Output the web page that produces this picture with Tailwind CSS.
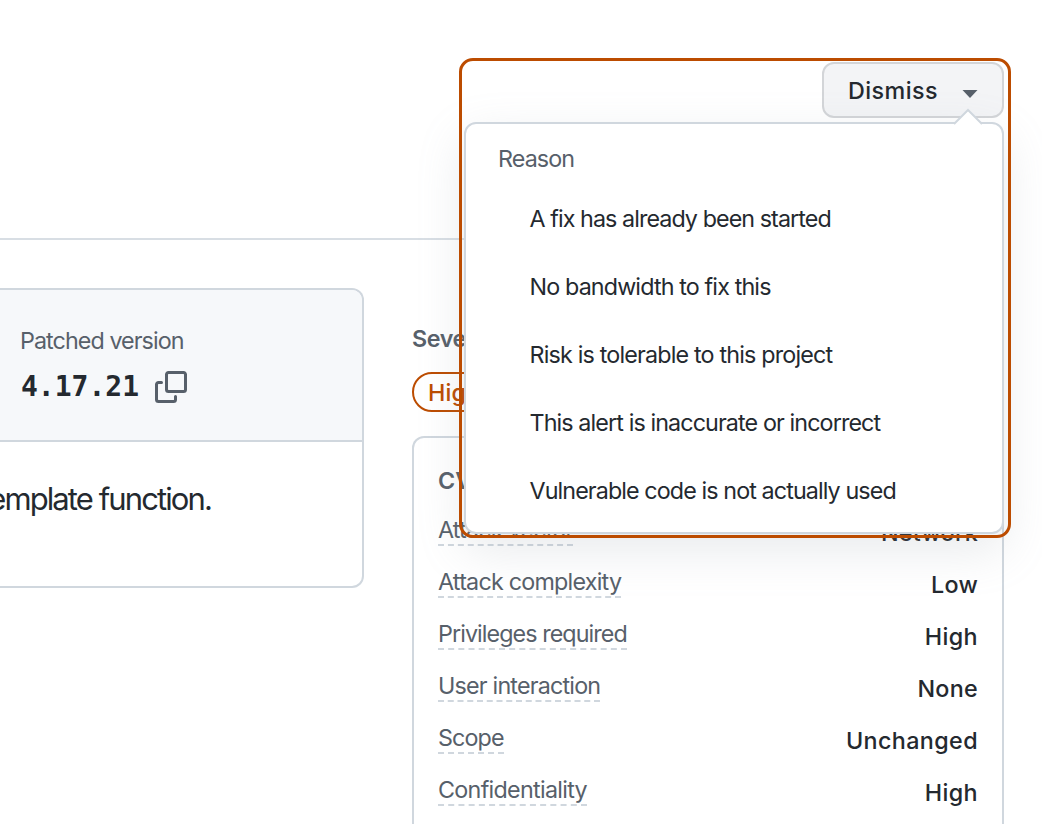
<!DOCTYPE html>
<html lang="en">
<head>
<meta charset="utf-8">
<title>Dismiss alert</title>
<script src="https://cdn.jsdelivr.net/npm/@tailwindcss/browser@4"></script>
</head>
<body class="bg-white">
<div class="relative flex h-[824px] w-[1042px] flex-col overflow-hidden bg-white font-['Inter',sans-serif] text-[23.3px] leading-8 text-[#24292f]">

  <header class="flex h-60 w-[1004px] shrink-0 items-start justify-end border-b-2 border-[#d8dee4] pt-[62px]">
    <button class="flex h-14 w-[182px] items-center gap-6 rounded-xl border-2 border-[#d3d5d8] bg-[#f3f4f6] pl-6 font-medium">
      <span class="pt-0.5 tracking-[0.45px]">Dismiss</span>
      <svg class="mt-2 h-2 w-4" viewBox="0 0 16 8" fill="#57606a"><path d="M0.5 0h15L8 8z"/></svg>
    </button>
  </header>

  <main class="flex flex-1 gap-12 pt-12">
    <section class="h-[300px] w-[364px] shrink-0 overflow-hidden rounded-r-xl border-2 border-l-0 border-[#d0d7de]">
      <div class="flex h-[152px] flex-col border-b-2 border-[#d0d7de] bg-[#f6f8fa] pt-[35px] pl-5">
        <div class="text-[#57606a]"><span class="tracking-[-0.93px]">Patched version</span></div>
        <div class="mt-3.5 flex h-8 items-center gap-4 pl-px">
          <span class="font-['DejaVu_Sans_Mono',monospace] text-[28px] font-bold">4.17.21</span>
          <svg class="h-8 w-8" viewBox="0 0 16 16" fill="#57606a"><path d="M0 6.75C0 5.784.784 5 1.75 5h1.5a.75.75 0 0 1 0 1.5h-1.5a.25.25 0 0 0-.25.25v7.5c0 .138.112.25.25.25h7.5a.25.25 0 0 0 .25-.25v-1.5a.75.75 0 0 1 1.5 0v1.5A1.75 1.75 0 0 1 9.25 16h-7.5A1.75 1.75 0 0 1 0 14.25Z"/><path d="M5 1.75C5 .784 5.784 0 6.75 0h7.5C15.216 0 16 .784 16 1.75v7.5A1.75 1.75 0 0 1 14.25 11h-7.5A1.75 1.75 0 0 1 5 9.25Zm1.75-.25a.25.25 0 0 0-.25.25v7.5c0 .138.112.25.25.25h7.5a.25.25 0 0 0 .25-.25v-7.5a.25.25 0 0 0-.25-.25Z"/></svg>
        </div>
      </div>
      <p class="flex h-[113px] w-[211px] items-center justify-end text-[31px] tracking-[-1.9px] whitespace-nowrap">template function.</p>
    </section>

    <aside class="flex w-[592px] shrink-0 flex-col items-start pt-[35px]">
      <h3 class="font-semibold tracking-[-0.4px] text-[#57606a]">Severity</h3>
      <div class="mt-[17px] flex h-10 items-center rounded-full border-2 border-[#bc4c00] px-3.5 pt-0.5 font-medium tracking-[0.2px] text-[#bc4c00]">High</div>
      <div class="mt-6 flex h-[420px] w-full shrink-0 flex-col rounded-t-xl border-2 border-b-0 border-[#d0d7de] px-6 pt-[27px]">
        <h4 class="font-semibold text-[#57606a]">CVSS base metrics</h4>
        <dl class="mt-[17px] flex flex-col">
          <div class="flex h-[52px] justify-between"><dt class="h-8 border-b-2 border-dashed border-[#d0d7de] tracking-[-0.8px] text-[#57606a]">Attack vector</dt><dd class="pt-[3px] font-medium tracking-[0.3px]">Network</dd></div>
          <div class="flex h-[52px] justify-between"><dt class="h-8 border-b-2 border-dashed border-[#d0d7de] tracking-[-0.77px] text-[#57606a]">Attack complexity</dt><dd class="pt-[3px] font-medium tracking-[0.3px]">Low</dd></div>
          <div class="flex h-[52px] justify-between"><dt class="h-8 border-b-2 border-dashed border-[#d0d7de] tracking-[-0.92px] text-[#57606a]">Privileges required</dt><dd class="pt-[3px] font-medium tracking-[0.4px]">High</dd></div>
          <div class="flex h-[52px] justify-between"><dt class="h-8 border-b-2 border-dashed border-[#d0d7de] tracking-[-0.8px] text-[#57606a]">User interaction</dt><dd class="pt-[3px] font-medium tracking-[0.3px]">None</dd></div>
          <div class="flex h-[52px] justify-between"><dt class="h-8 border-b-2 border-dashed border-[#d0d7de] tracking-[-0.9px] text-[#57606a]">Scope</dt><dd class="pt-[3px] font-medium tracking-[0.4px]">Unchanged</dd></div>
          <div class="flex h-[52px] justify-between"><dt class="h-8 border-b-2 border-dashed border-[#d0d7de] tracking-[-0.7px] text-[#57606a]">Confidentiality</dt><dd class="pt-[3px] font-medium tracking-[0.4px]">High</dd></div>
        </dl>
      </div>
    </aside>
  </main>

  <div class="absolute top-[122px] left-[464px] h-[412px] w-[540px] rounded-xl border-2 border-[#d0d7de] bg-white pt-[19px] pl-8 shadow-[0_16px_48px_rgba(140,149,159,0.2)]">
    <svg class="absolute top-[-16px] right-[18px] h-[18px] w-8" viewBox="0 0 32 18"><path d="M2 18L2 16L16 2L30 16L30 18z" fill="#fff"/><path d="M2 16L16 2L30 16" fill="none" stroke="#d0d7de" stroke-width="2"/></svg>
    <div class="text-[#57606a]"><span class="tracking-[-0.9px]">Reason</span></div>
    <ul class="flex flex-col pt-7 pl-[31.5px]">
      <li class="h-[68px]"><span class="tracking-[-0.93px]">A fix has already been started</span></li>
      <li class="h-[68px]"><span class="tracking-[-0.86px]">No bandwidth to fix this</span></li>
      <li class="h-[68px]"><span class="tracking-[-0.82px]">Risk is tolerable to this project</span></li>
      <li class="h-[68px]"><span class="tracking-[-0.89px]">This alert is inaccurate or incorrect</span></li>
      <li class="h-8"><span class="tracking-[-0.9px]">Vulnerable code is not actually used</span></li>
    </ul>
  </div>
  <div class="absolute top-[58px] left-[459px] h-[480px] w-[552px] rounded-[14px] border-3 border-[#bc4c00]"></div>
</div>
</body>
</html>
